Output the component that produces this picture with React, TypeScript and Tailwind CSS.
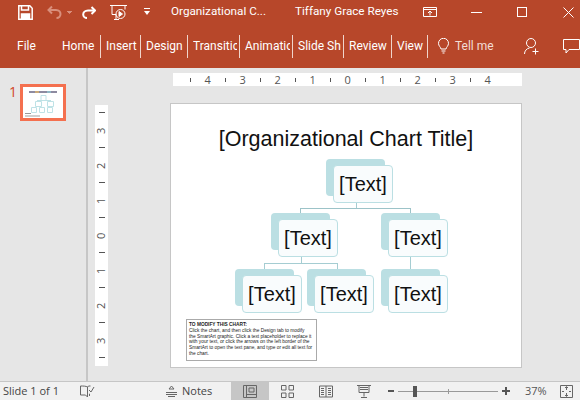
const sans = '"Open Sans","Noto Sans",sans-serif';
const chrome = 'Roboto,"Open Sans",sans-serif';
const arial = '"Liberation Sans",sans-serif';

const Tab = ({ label, w }: { label: string; w: number }) => (
  <div className="flex h-[23px] shrink-0 items-center border-r border-[#f0d5cc] pl-[5px] pr-[2px] whitespace-nowrap" style={{ width: w }}>
    <span className="block flex-1 overflow-hidden">{label}</span>
  </div>
);

const Box = ({ x, y, w = 59, h = 38 }: { x: number; y: number; w?: number; h?: number }) => (
  <>
    <div className="absolute rounded-[4px] bg-[#bbdfe3]" style={{ left: x - 7, top: y - 6, width: w, height: h - 1 }} />
    <div
      className="absolute flex items-center justify-center rounded-[4px] border border-[#bbdfe3] bg-[#f9fcfd] text-[20px] text-[#111]"
      style={{ left: x, top: y, width: w + 1, height: h, fontFamily: arial }}
    >
      [Text]
    </div>
  </>
);

const Line = ({ x, y, w, h, c = '#a5cdd2' }: { x: number; y: number; w: number; h: number; c?: string }) => (
  <div className="absolute" style={{ left: x, top: y, width: w, height: h, background: c }} />
);

const hr = ['4', '3', '2', '1', '0', '1', '2', '3', '4'];
const vr = ['3', '2', '1', '0', '1', '2', '3'];

export default function App() {
  return (
    <div className="flex h-[400px] w-[580px] flex-col overflow-hidden bg-[#e6e6e6]" style={{ fontFamily: sans }}>
      <div className="h-[68px] shrink-0 bg-[#b7472a] text-white" style={{ fontFamily: chrome }}>
        <div className="flex h-[24px] items-center text-[11.700px]">
          <svg width="15" height="15" viewBox="0 0 15 15" className="ml-[18px]" fill="none" stroke="#fff" strokeWidth="1.500">
            <path d="M.8.800h11l2.400 2.400v11H.8z" />
            <path d="M3.500 1v4h7V1" />
            <path d="M3.500 14V9h8v5" fill="#fff" />
          </svg>
          <svg width="26" height="14" viewBox="0 0 26 14" className="ml-[14px]" fill="none" stroke="#d98f7c" strokeWidth="2">
            <path d="M5 1.500 1.500 5 5 8.500" />
            <path d="M2 5h7c3 0 4.500 2 4.500 4S12 13 9.500 13" />
            <path d="M20 6l2.500 2.500L25 6" strokeWidth="1" fill="#d98f7c" />
          </svg>
          <svg width="14" height="13" viewBox="0 0 14 13" className="ml-[9px]" fill="none" stroke="#fff" strokeWidth="2">
            <path d="M9.500 1 13 4.500 9.500 8" />
            <path d="M12.500 4.500H6C3 4.500 1.200 6.500 1.200 8.500s1.800 3.500 3.800 3.500" />
          </svg>
          <svg width="17" height="18" viewBox="0 0 17 18" className="ml-[14px]" fill="none" stroke="#fff" strokeWidth="1">
            <path d="M0 2.500h17M2 2.500v9h4M15 2.500v4M9 16.500H4M6 11.500v5" />
            <circle cx="10.500" cy="11" r="4.500" />
            <path d="M9 8.500v5l3.500-2.500z" fill="#fff" />
          </svg>
          <svg width="6" height="8" viewBox="0 0 6 8" className="ml-[17px]" fill="#fff">
            <rect x="0" y="0" width="6" height="1" />
            <path d="M0 3h6L3 7z" />
          </svg>
          <span className="ml-[21px] w-[124px] whitespace-nowrap">Organizational C...</span>
          <span className="w-[102px] whitespace-nowrap">Tiffany Grace Reyes</span>
          <svg width="14" height="10" viewBox="0 0 14 10" className="ml-[26px]" fill="none" stroke="#fff">
            <path d="M.5.500h13v9H.5zM.5 2.500h13M7 8.500V4M5 6l2-2 2 2" />
          </svg>
          <div className="ml-[34px] h-px w-[11px] bg-white" />
          <div className="ml-[35px] h-[10px] w-[10px] border border-white" />
          <svg width="11" height="11" viewBox="0 0 11 11" className="ml-[36px]" stroke="#fff" fill="none">
            <path d="M.5.500l10 10M10.500.500l-10 10" />
          </svg>
        </div>
        <div className="flex h-[44px] items-center text-[12px]">
          <div className="ml-[17px] w-[40px]">File</div>
          <Tab label="Home" w={44} />
          <Tab label="Insert" w={40} />
          <Tab label="Design" w={47} />
          <Tab label="Transitions" w={52} />
          <Tab label="Animations" w={53} />
          <Tab label="Slide Show" w={51} />
          <Tab label="Review" w={48} />
          <Tab label="View" w={36} />
          <svg width="11" height="16" viewBox="0 0 11 16" className="ml-[10px] shrink-0" fill="none" stroke="#fff">
            <path d="M3 11C2.700 9 .5 8 .5 5.300a5 5 0 0 1 10 0C10.500 8 8.300 9 8 11zM3.500 13h4M4.500 15h2" />
          </svg>
          <span className="ml-[6px] w-[40px] shrink-0 whitespace-nowrap text-[#f3ddd6]">Tell me</span>
          <svg width="16" height="17" viewBox="0 0 16 17" className="ml-[29px] shrink-0" fill="none" stroke="#fff">
            <circle cx="7" cy="5" r="4.500" />
            <path d="M.5 16c0-3 2-5.500 5-6M11.500 10.500v6M8.500 13.500h6" />
          </svg>
          <svg width="17" height="15" viewBox="0 0 17 15" className="ml-[23px] shrink-0" fill="none" stroke="#fff">
            <path d="M.5.500h16v10H6l-3 3.500v-3.500H.5z" />
          </svg>
        </div>
      </div>

      <div className="flex h-[313px] shrink-0">
        <div className="relative h-full w-[88px] shrink-0 border-r-2 border-[#c6c6c6]">
          <span className="absolute left-[9px] top-[16px] text-[14px] leading-[16px] text-[#d24726]">1</span>
          <div className="absolute left-[20px] top-[16px] h-[37px] w-[46px] border-[3px] border-[#f4704f] bg-white">
            <svg width="40" height="31" viewBox="0 0 40 31" fill="none" className="block">
              <rect x="6" y="4" width="28" height="2" fill="#8d8aa0" />
              <rect x="12" y="4" width="4" height="2" fill="#c9a87a" />
              <rect x="24" y="4" width="4" height="2" fill="#8fb6c4" />
              <path d="M18 8.500h5v5h-5zM12.500 14.500h6v5h-6zM24.500 14.500h6v5h-6zM8.500 20.500h5v5h-5zM16.500 20.500h5v5h-5zM24.500 20.500h5v5h-5z" stroke="#bfe2e6" />
              <path d="M14 13.500h14" stroke="#bfe2e6" />
              <rect x="2" y="26" width="6" height="1" fill="#999" />
              <rect x="2" y="28" width="15" height="2" fill="#cfcfcf" />
            </svg>
          </div>
        </div>
        <div className="flex-1">
          <div className="h-[310px] border-b-2 border-[#c6c6c6]">
            <div className="ml-[85px] mt-[5px] flex h-[13px] w-[349px] items-center bg-white pl-[8.500px] text-[11px] leading-none text-[#555]">
              {hr.map((n, i) => (
                <div key={i} className="contents">
                  <span className="flex w-[17.500px] shrink-0 justify-center">
                    <span className="h-[4px] w-px bg-[#555]" />
                  </span>
                  <span className="flex w-[17.500px] shrink-0 justify-center">{n}</span>
                </div>
              ))}
            </div>
            <div className="mt-[17px] flex items-start">
              <div className="ml-[7px] mt-[2px] flex h-[261px] w-[13px] flex-col items-center overflow-hidden bg-white text-[11px] leading-none text-[#555]">
                {vr.map((n, i) => (
                  <div key={i} className="contents">
                    <span className={i === 0 ? 'flex h-[17.500px] shrink-0 items-center -mt-[1px]' : 'flex h-[17.500px] shrink-0 items-center'}>
                      <span className="h-px w-[6px] bg-[#555]" />
                    </span>
                    <span className="flex h-[17.500px] shrink-0 -rotate-90 items-center">{n}</span>
                  </div>
                ))}
                <span className="flex h-[17.500px] shrink-0 items-center">
                  <span className="h-px w-[6px] bg-[#555]" />
                </span>
              </div>
              <div className="relative ml-[62px] h-[265px] w-[352px] border border-[#c6c6c6] bg-white" style={{ fontFamily: arial }}>
                <div className="mt-[23px] whitespace-nowrap text-center text-[21.500px] leading-[24px] text-[#111]">[Organizational Chart Title]</div>
                <Line x={185} y={98} w={1} h={6} />
                <Line x={129} y={104} w={111} h={1} c="#9cc3c8" />
                <Line x={129} y={104} w={1} h={6} c="#9cc3c8" />
                <Line x={239} y={104} w={1} h={6} c="#9cc3c8" />
                <Line x={130} y={153} w={1} h={6} />
                <Line x={93} y={159} w={74} h={1} />
                <Line x={93} y={159} w={1} h={7} />
                <Line x={166} y={159} w={1} h={7} />
                <Line x={239} y={153} w={1} h={13} />
                <Box x={162} y={61} />
                <Box x={107} y={115} />
                <Box x={217} y={115} />
                <Box x={71} y={171} />
                <Box x={143} y={171} />
                <Box x={217} y={171} />
                <div className="absolute left-[15px] top-[215px] h-[42px] w-[131px] whitespace-nowrap border border-[#aaa] bg-white pl-[2px] pt-[2px] text-[4.800px] leading-[5.800px] text-[#222]">
                  <div className="font-bold">TO MODIFY THIS CHART:</div>
                  <div>Click the chart, and then click the Design tab to modify</div>
                  <div>the SmartArt graphic. Click a text placeholder to replace it</div>
                  <div>with your text, or click the arrows on the left border of the</div>
                  <div>SmartArt to open the text pane, and type or edit all text for</div>
                  <div>the chart.</div>
                </div>
              </div>
            </div>
          </div>
        </div>
      </div>

      <div className="flex flex-1 items-center border-t border-[#c6c6c6] bg-[#f1f1f1] text-[11px] text-[#444]">
        <span className="ml-[3px] w-[77px] whitespace-nowrap">Slide 1 of 1</span>
        <svg width="15" height="13" viewBox="0 0 15 13" fill="none" stroke="#666">
          <path d="M7.500 2C6 1 3 1 .5 1v9h5l2 2V2l1-1h2M10 9H9.500v2" />
          <path d="M9 5l2 2 3-5" />
        </svg>
        <svg width="12" height="12" viewBox="0 0 12 12" className="ml-[71px]" fill="none" stroke="#666">
          <path d="M0 7.500h11M0 9.500h11M2 11.500h7M3 4l2.500-3L8 4z" />
        </svg>
        <span className="ml-[4px] w-[49px]">Notes</span>
        <div className="flex h-full w-[38px] items-center justify-center bg-[#c6c6c6]">
          <svg width="14" height="13" viewBox="0 0 14 13" fill="none" stroke="#666">
            <path d="M.5.500h13v12H.5zM3.500.500v12M3.500 9.500h10M6 3h5v4H6z" />
          </svg>
        </div>
        <svg width="13" height="13" viewBox="0 0 13 13" className="ml-[12px]" fill="none" stroke="#666">
          <path d="M.5.500h4.500v4.500H.5zM8 .5h4.500v4.500H8zM.5 8H5v4.500H.5zM8 8h4.500v4.500H8z" />
        </svg>
        <svg width="14" height="13" viewBox="0 0 14 13" className="ml-[25px]" fill="none" stroke="#666">
          <path d="M.5 1h13v11H.5zM7 1v11M2 3.500h3M2 5.500h3M2 7.500h3M2 9.500h3M9 3.500h3M9 5.500h3M9 7.500h3M9 9.500h3" />
        </svg>
        <svg width="14" height="14" viewBox="0 0 14 14" className="ml-[24px]" fill="none" stroke="#666">
          <path d="M0 1.500h14M2 1.500v7h10v-7M3 3.500h8M3 5.500h8M7 8.500v4M4 13.500h6" />
        </svg>
        <div className="ml-[17px] h-[2px] w-[6px] bg-[#555]" />
        <div className="relative ml-[4px] h-px w-[100px] bg-[#999]">
          <div className="absolute left-[15px] top-[-5px] h-[11px] w-[4px] bg-[#555]" />
          <div className="absolute left-[50px] top-[-2px] h-[5px] w-px bg-[#999]" />
        </div>
        <div className="relative ml-[4px] h-[2px] w-[8px] bg-[#555]">
          <div className="absolute left-[3px] top-[-3px] h-[8px] w-[2px] bg-[#555]" />
        </div>
        <span className="ml-[15px] w-[21px] whitespace-nowrap text-[#555]">37%</span>
        <svg width="13" height="13" viewBox="0 0 13 13" className="ml-[14px]" fill="none" stroke="#666">
          <path d="M.5.500h12v12H.5zM6.500 2v3M5 3l1.500-1.500L8 3M6.500 8v3M5 10l1.500 1.500L8 10M2 6.500h2M9 6.500h2" />
        </svg>
      </div>
    </div>
  );
}
